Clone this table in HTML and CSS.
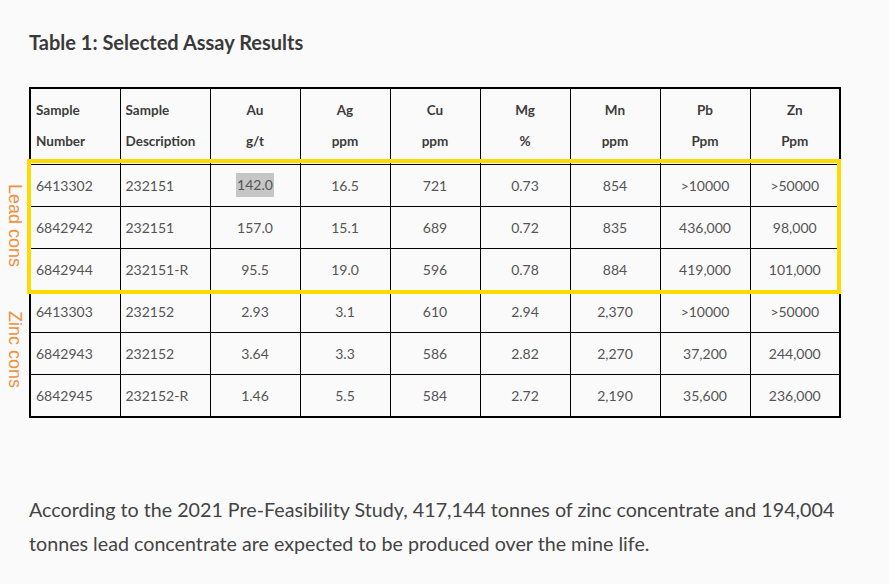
FILE: index.html
```html
<!DOCTYPE html>
<html>
<head>
<meta charset="utf-8">
<link rel="stylesheet" href="styles.css">
</head>
<body>
<main class="page">
  <h2 class="title">Table 1: Selected Assay Results</h2>
  <div class="table-wrap">
    <table class="assay">
      <thead>
        <tr>
          <th class="left"><span>Sample</span><span>Number</span></th>
          <th class="left"><span>Sample</span><span>Description</span></th>
          <th><span>Au</span><span>g/t</span></th>
          <th><span>Ag</span><span>ppm</span></th>
          <th><span>Cu</span><span>ppm</span></th>
          <th><span>Mg</span><span>%</span></th>
          <th><span>Mn</span><span>ppm</span></th>
          <th><span>Pb</span><span>Ppm</span></th>
          <th><span>Zn</span><span>Ppm</span></th>
        </tr>
      </thead>
      <tbody>
        <tr><td class="left">6413302</td><td class="left">232151</td><td><span class="hl">142.0</span></td><td>16.5</td><td>721</td><td>0.73</td><td>854</td><td>&gt;10000</td><td>&gt;50000</td></tr>
        <tr><td class="left">6842942</td><td class="left">232151</td><td>157.0</td><td>15.1</td><td>689</td><td>0.72</td><td>835</td><td>436,000</td><td>98,000</td></tr>
        <tr><td class="left">6842944</td><td class="left">232151-R</td><td>95.5</td><td>19.0</td><td>596</td><td>0.78</td><td>884</td><td>419,000</td><td>101,000</td></tr>
        <tr><td class="left">6413303</td><td class="left">232152</td><td>2.93</td><td>3.1</td><td>610</td><td>2.94</td><td>2,370</td><td>&gt;10000</td><td>&gt;50000</td></tr>
        <tr><td class="left">6842943</td><td class="left">232152</td><td>3.64</td><td>3.3</td><td>586</td><td>2.82</td><td>2,270</td><td>37,200</td><td>244,000</td></tr>
        <tr><td class="left">6842945</td><td class="left">232152-R</td><td>1.46</td><td>5.5</td><td>584</td><td>2.72</td><td>2,190</td><td>35,600</td><td>236,000</td></tr>
      </tbody>
    </table>
    <div class="lead-box"></div>
    <div class="side-label lead-label">Lead cons</div>
    <div class="side-label zinc-label">Zinc cons</div>
  </div>
  <p class="body-text">According to the 2021 Pre-Feasibility Study, 417,144 tonnes of zinc concentrate and 194,004 tonnes lead concentrate are expected to be produced over the mine life.</p>
</main>
</body>
</html>
```

FILE: styles.css
```css
html, body {
  margin: 0;
  padding: 0;
  background: #fafafa;
}

.page {
  padding: 28px 0 0 29px;
  font-family: Lato, "Open Sans", sans-serif;
  color: #444;
  width: 820px;
}

.title {
  margin: 0;
  font-size: 20px;
  line-height: 28px;
  font-weight: 700;
  color: #3a3a3a;
}

.table-wrap {
  position: relative;
  margin-top: 31px;
  width: 811px;
}

.assay {
  border-collapse: collapse;
  border: 2px solid #000;
  table-layout: fixed;
  width: 811px;
}

.assay th,
.assay td {
  border: 1px solid #000;
  width: 90px;
  padding: 0 5px;
  text-align: center;
  vertical-align: middle;
  box-sizing: border-box;
}

.assay th.left,
.assay td.left {
  text-align: left;
}

.assay th {
  height: 76px;
  font-size: 13.5px;
  font-weight: 700;
  color: #3c3c3c;
}

.assay th span {
  display: block;
  line-height: 31px;
}

.assay td {
  height: 42.2px;
  font-size: 14px;
  color: #555;
}

.hl {
  background: #c6c6c6;
  display: inline-block;
  line-height: 24px;
  padding: 0 1px;
}

.lead-box {
  position: absolute;
  left: -2px;
  top: 72px;
  width: 814px;
  height: 135px;
  border: 4px solid #fddb00;
  box-sizing: border-box;
}

.side-label {
  position: absolute;
  left: -22px;
  font-family: "Liberation Sans", Arial, sans-serif;
  font-size: 18px;
  color: #f0903a;
  writing-mode: vertical-rl;
  line-height: 15px;
}

.lead-label {
  top: 97px;
}

.zinc-label {
  top: 224px;
}

.body-text {
  margin: 75px 0 0 0;
  font-size: 19.7px;
  line-height: 34px;
  color: #444;
  width: 815px;
}
```
